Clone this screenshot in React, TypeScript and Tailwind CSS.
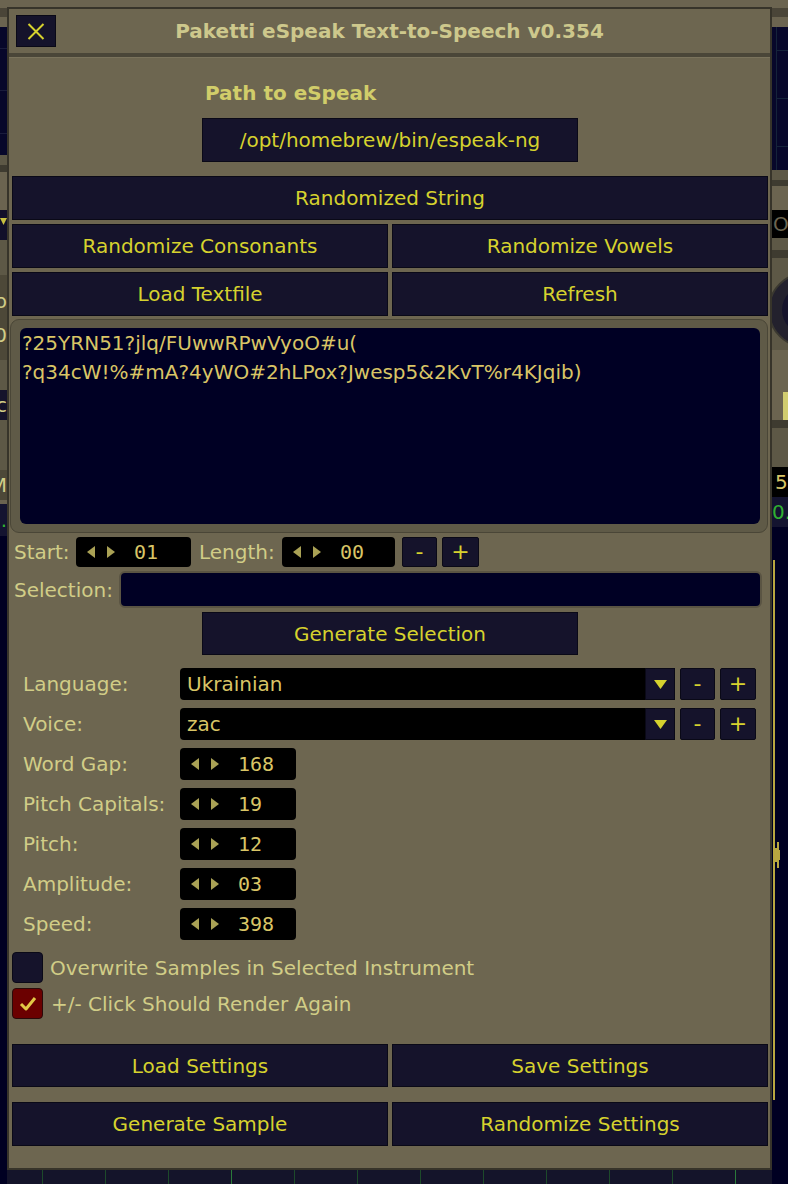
import React from "react";

const FONT = { fontFamily: '"DejaVu Sans", "Liberation Sans", sans-serif' };
const MONO = { fontFamily: '"DejaVu Sans Mono", "Liberation Mono", monospace' };

function Btn({ children, className = "" }: { children?: React.ReactNode; className?: string }) {
  return (
    <div
      className={`flex items-center justify-center bg-[#15132b] border border-[#0a0917] text-[#d6d22e] text-[20px] leading-none ${className}`}
    >
      {children}
    </div>
  );
}

function TriL() {
  return (
    <svg width="8" height="12" viewBox="0 0 8 12">
      <polygon points="8,0 0,6 8,12" fill="#aaa255" />
    </svg>
  );
}
function TriR() {
  return (
    <svg width="8" height="12" viewBox="0 0 8 12">
      <polygon points="0,0 8,6 0,12" fill="#aaa255" />
    </svg>
  );
}

function Spin({ value, w = "w-[116px]", h = "h-[32px]" }: { value: string; w?: string; h?: string }) {
  return (
    <div className={`flex items-center bg-black rounded-[4px] ${w} ${h} pl-[11px] shrink-0`}>
      <TriL />
      <div className="ml-[12px]">
        <TriR />
      </div>
      <span className="ml-[19px] text-[20px] text-[#d9c566] leading-none" style={MONO}>
        {value}
      </span>
    </div>
  );
}

function SmallBtn({ label, w = "w-[35px]", h = "h-[32px]" }: { label: string; w?: string; h?: string }) {
  return (
    <div
      className={`flex items-center justify-center bg-[#15132b] border border-[#0a0917] rounded-[2px] ${w} ${h} text-[#d6d22e] text-[22px] leading-none shrink-0`}
    >
      {label}
    </div>
  );
}

function Dropdown({ value }: { value: string }) {
  return (
    <div className="flex items-stretch bg-black rounded-l-[4px] w-[495px] h-[32px] shrink-0">
      <div className="flex-1 flex items-center pl-[7px] text-[20px] text-[#d9c566] leading-none">{value}</div>
      <div className="w-[30px] flex items-center justify-center bg-[#15132b] border border-[#0a0917]">
        <svg width="13" height="9" viewBox="0 0 13 9">
          <polygon points="0,0 13,0 6.5,9" fill="#d6d22e" />
        </svg>
      </div>
    </div>
  );
}

function ParamRow({ label, value, mt = "mt-[8px]" }: { label: string; value: string; mt?: string }) {
  return (
    <div className={`flex items-center h-[32px] ${mt}`}>
      <div className="w-[168px] pl-[11px] text-[20px] text-[#d1cd87] leading-none shrink-0">{label}</div>
      <Spin value={value} />
    </div>
  );
}

function EdgeText({ text, color, cls }: { text: string; color: string; cls: string }) {
  return (
    <div className={`flex items-center justify-end overflow-hidden ${cls}`}>
      <span className={`shrink-0 text-[20px] leading-none ${color}`}>{text}</span>
    </div>
  );
}

function LeftStrip() {
  return (
    <div className="w-[7px] flex flex-col shrink-0">
      <div className="h-[8px] bg-[#6b6450]" />
      <div className="h-[9px] bg-[#4a4538]" />
      <div className="h-[10px] bg-[#6b6450]" />
      <div className="h-[128px] bg-[#07072a] flex flex-col justify-around">
        <div className="h-px bg-[#1a1c3c]" />
        <div className="h-px bg-[#1a1c3c]" />
        <div className="h-px bg-[#1a1c3c]" />
      </div>
      <div className="h-[10px] bg-[#5d5846]" />
      <div className="h-[7px] bg-[#3e3b30]" />
      <div className="h-[38px] bg-[#6b6450]" />
      <div className="h-[30px] bg-[#12102a] flex justify-start pt-[8px]">
        <svg width="7" height="7" viewBox="0 0 7 7">
          <polygon points="0,0 7,0 3.5,7" fill="#c8c040" />
        </svg>
      </div>
      <div className="h-[35px] bg-[#5d5846]" />
      <div className="h-[85px] bg-[#4d4838] flex flex-col justify-center gap-[14px]">
        <EdgeText text="o" color="text-[#d1cd87]" cls="h-[20px]" />
        <EdgeText text="0" color="text-[#d1cd87]" cls="h-[20px]" />
      </div>
      <div className="h-[30px] bg-[#5d5846]" />
      <div className="h-[30px] bg-[#15132b]">
        <EdgeText text="c" color="text-[#d1cd87]" cls="h-[30px]" />
      </div>
      <div className="h-[50px] bg-[#5d5846]" />
      <div className="h-[30px] bg-[#4d4838]">
        <EdgeText text="M" color="text-[#d1cd87]" cls="h-[30px]" />
      </div>
      <div className="h-[4px] bg-[#6b6450]" />
      <div className="h-[32px] bg-[#141430]">
        <EdgeText text="0." color="text-[#30b030]" cls="h-[32px]" />
      </div>
      <div className="flex-1 bg-[#000022]" />
    </div>
  );
}

function RightStrip() {
  return (
    <div className="flex-1 flex flex-col overflow-hidden">
      <div className="h-[8px] bg-[#6b6450]" />
      <div className="h-[9px] bg-[#4a4538]" />
      <div className="h-[10px] bg-[#6b6450]" />
      <div className="h-[143px] bg-[#07072a] flex">
        <div className="w-[4px]" />
        <div className="w-px bg-[#15233a]" />
        <div className="flex-1 flex flex-col justify-around">
          <div className="h-px bg-[#15233a]" />
          <div className="h-px bg-[#15233a]" />
          <div className="h-px bg-[#15233a]" />
        </div>
      </div>
      <div className="h-[10px] bg-[#5d5846]" />
      <div className="h-[6px] bg-[#3e3b30]" />
      <div className="h-[24px] bg-[#6b6450]" />
      <div className="h-[28px] bg-black flex items-center overflow-hidden">
        <span className="shrink-0 text-[20px] leading-none text-[#6b6450] pl-[1px]">Of</span>
      </div>
      <div className="h-[12px] bg-[#5d5846]" />
      <div className="h-[8px] bg-[#3e3b30]" />
      <div className="h-[12px] bg-[#5d5846]" />
      <div className="h-[80px] bg-[#5d5846]">
        <svg width="16" height="80" viewBox="0 0 16 80">
          <circle cx="34" cy="40" r="37" fill="#23212d" stroke="#3a3830" strokeWidth="2" />
          <circle cx="34" cy="40" r="24" fill="#15132b" />
        </svg>
      </div>
      <div className="h-[42px] bg-[#6b6450]" />
      <div className="h-[28px] bg-[#6b6450] flex justify-end">
        <div className="w-[5px] bg-[#d0cc70]" />
      </div>
      <div className="h-[8px] bg-[#3e3b30]" />
      <div className="h-[39px] bg-[#5d5846]" />
      <div className="h-[30px] bg-black flex items-center overflow-hidden">
        <span className="shrink-0 text-[20px] leading-none text-[#d9c566] pl-[3px]">5</span>
      </div>
      <div className="h-[30px] bg-[#141430] flex items-center overflow-hidden">
        <span className="shrink-0 text-[20px] leading-none text-[#30b030]">0.0</span>
      </div>
      <div className="flex-1 bg-[#000022] flex">
        <div className="ml-[1px] w-[2px] mt-[33px] h-[540px] bg-[#b8a640]" />
        <div className="mt-[313px] h-[30px] flex items-center">
          <div className="w-[2px] h-[14px] bg-[#b8a640]" />
          <div className="w-[2px] h-[26px] bg-[#b8a640]" />
          <div className="w-[1px] h-[10px] bg-[#b8a640]" />
        </div>
      </div>
    </div>
  );
}

export default function App() {
  return (
    <div className="w-[788px] h-[1184px] bg-[#000022] flex overflow-hidden" style={FONT}>
      <LeftStrip />
      <div className="w-[765px] flex flex-col shrink-0">
        <div className="h-[7px] bg-[#6b6450]" />
        <div className="border-2 border-[#37342a] bg-[#6d6650] flex flex-col">
          {/* Title bar */}
          <div className="h-[44px] flex items-center relative border-b-[4px] border-[#4a4638] box-content">
            <div className="ml-[7px] w-[40px] h-[32px] bg-[#15132b] border border-[#0a0917] flex items-center justify-center shrink-0">
              <svg width="18" height="17" viewBox="0 0 18 17">
                <path d="M1.5 1 L16.5 16 M16.5 1 L1.5 16" stroke="#d6d22e" strokeWidth="2" />
              </svg>
            </div>
            <div className="flex-1 text-center text-[20px] font-bold text-[#cdc88c] leading-none pr-[47px]">
              Paketti eSpeak Text-to-Speech v0.354
            </div>
          </div>

          {/* Content */}
          <div className="flex flex-col pl-[3px] pr-[2px] pb-[22px] border-t border-[#7a735c]">
            <div className="w-[376px] mx-auto flex flex-col pt-[23px]">
              <div className="h-[24px] pl-[3px] text-[20px] font-bold text-[#d1cd6a] leading-[24px]">Path to eSpeak</div>
              <Btn className="mt-[13px] h-[44px]">/opt/homebrew/bin/espeak-ng</Btn>
            </div>

            <Btn className="mt-[14px] h-[44px]">Randomized String</Btn>
            <div className="flex gap-[4px] mt-[4px]">
              <Btn className="flex-1 h-[44px]">Randomize Consonants</Btn>
              <Btn className="flex-1 h-[44px]">Randomize Vowels</Btn>
            </div>
            <div className="flex gap-[4px] mt-[4px]">
              <Btn className="flex-1 h-[44px]">Load Textfile</Btn>
              <Btn className="flex-1 h-[44px]">Refresh</Btn>
            </div>

            {/* Text area */}
            <div className="mt-[3px] -ml-[2px] h-[214px] rounded-[9px] bg-[#5f5a47] border border-[#4a4637] pl-[9px] pr-[7px] pt-[8px] pb-[8px]">
              <div className="h-full rounded-[6px] bg-[#000024] pl-[2px] pt-[1px] text-[20px] text-[#d9c566] leading-[29px]">
                <div>?25YRN51?jlq/FUwwRPwVyoO#u(</div>
                <div>?q34cW!%#mA?4yWO#2hLPox?Jwesp5&amp;2KvT%r4KJqib)</div>
              </div>
            </div>

            {/* Start / Length */}
            <div className="mt-[4px] h-[30px] flex items-center">
              <div className="pl-[2px] w-[64px] text-[20px] text-[#d1cd87] leading-none shrink-0">Start:</div>
              <Spin value="01" w="w-[115px]" h="h-[30px]" />
              <div className="ml-[8px] w-[83px] text-[20px] text-[#d1cd87] leading-none shrink-0">Length:</div>
              <Spin value="00" w="w-[113px]" h="h-[30px]" />
              <div className="ml-[7px]">
                <SmallBtn label="-" w="w-[35px]" h="h-[30px]" />
              </div>
              <div className="ml-[5px]">
                <SmallBtn label="+" w="w-[37px]" h="h-[30px]" />
              </div>
            </div>

            {/* Selection */}
            <div className="mt-[4px] h-[37px] flex items-center">
              <div className="pl-[2px] w-[107px] text-[20px] text-[#d1cd87] leading-none shrink-0">Selection:</div>
              <div className="w-[643px] h-[37px] rounded-[6px] bg-[#000024] border-2 border-[#5a5443]" />
            </div>

            <div className="flex justify-center mt-[4px]">
              <Btn className="w-[376px] h-[43px]">Generate Selection</Btn>
            </div>

            {/* Language / Voice */}
            <div className="mt-[13px] h-[32px] flex items-center">
              <div className="w-[168px] pl-[11px] text-[20px] text-[#d1cd87] leading-none shrink-0">Language:</div>
              <Dropdown value="Ukrainian" />
              <div className="ml-[5px]">
                <SmallBtn label="-" />
              </div>
              <div className="ml-[5px]">
                <SmallBtn label="+" w="w-[36px]" />
              </div>
            </div>
            <div className="mt-[8px] h-[32px] flex items-center">
              <div className="w-[168px] pl-[11px] text-[20px] text-[#d1cd87] leading-none shrink-0">Voice:</div>
              <Dropdown value="zac" />
              <div className="ml-[5px]">
                <SmallBtn label="-" />
              </div>
              <div className="ml-[5px]">
                <SmallBtn label="+" w="w-[36px]" />
              </div>
            </div>

            <ParamRow label="Word Gap:" value="168" />
            <ParamRow label="Pitch Capitals:" value="19" />
            <ParamRow label="Pitch:" value="12" />
            <ParamRow label="Amplitude:" value="03" />
            <ParamRow label="Speed:" value="398" />

            {/* Checkboxes */}
            <div className="mt-[12px] h-[31px] flex items-center">
              <div className="w-[31px] h-[31px] rounded-[4px] bg-[#15132b] border border-[#0a0917] shrink-0" />
              <div className="ml-[7px] text-[20px] text-[#d1cd87] leading-none">Overwrite Samples in Selected Instrument</div>
            </div>
            <div className="mt-[5px] h-[31px] flex items-center">
              <div className="w-[31px] h-[31px] rounded-[4px] bg-[#6b0000] border border-[#2a0a0a] shrink-0 flex items-center justify-center">
                <svg width="18" height="15" viewBox="0 0 18 15">
                  <path d="M2 8 L7 13 L16 2" stroke="#e2c846" strokeWidth="3" fill="none" strokeLinejoin="round" />
                </svg>
              </div>
              <div className="ml-[8px] text-[20px] text-[#d1cd87] leading-none">+/- Click Should Render Again</div>
            </div>

            <div className="flex gap-[4px] mt-[25px]">
              <Btn className="flex-1 h-[43px]">Load Settings</Btn>
              <Btn className="flex-1 h-[43px]">Save Settings</Btn>
            </div>
            <div className="flex gap-[4px] mt-[15px]">
              <Btn className="flex-1 h-[44px]">Generate Sample</Btn>
              <Btn className="flex-1 h-[44px]">Randomize Settings</Btn>
            </div>
          </div>
        </div>
        <div className="flex-1 bg-[#14142a] flex pl-[35px] gap-[62px]">
          <div className="w-px bg-[#1d4a2a]" />
          <div className="w-px bg-[#1d4a2a]" />
          <div className="w-px bg-[#1d4a2a]" />
          <div className="w-px bg-[#2a7a3a]" />
          <div className="w-px bg-[#1d4a2a]" />
          <div className="w-px bg-[#1d4a2a]" />
          <div className="w-px bg-[#1d4a2a]" />
          <div className="w-px bg-[#1d4a2a]" />
          <div className="w-px bg-[#1d4a2a]" />
          <div className="w-px bg-[#1d4a2a]" />
          <div className="w-px bg-[#1d4a2a]" />
          <div className="w-px bg-[#2a7a3a]" />
        </div>
      </div>
      <RightStrip />
    </div>
  );
}
